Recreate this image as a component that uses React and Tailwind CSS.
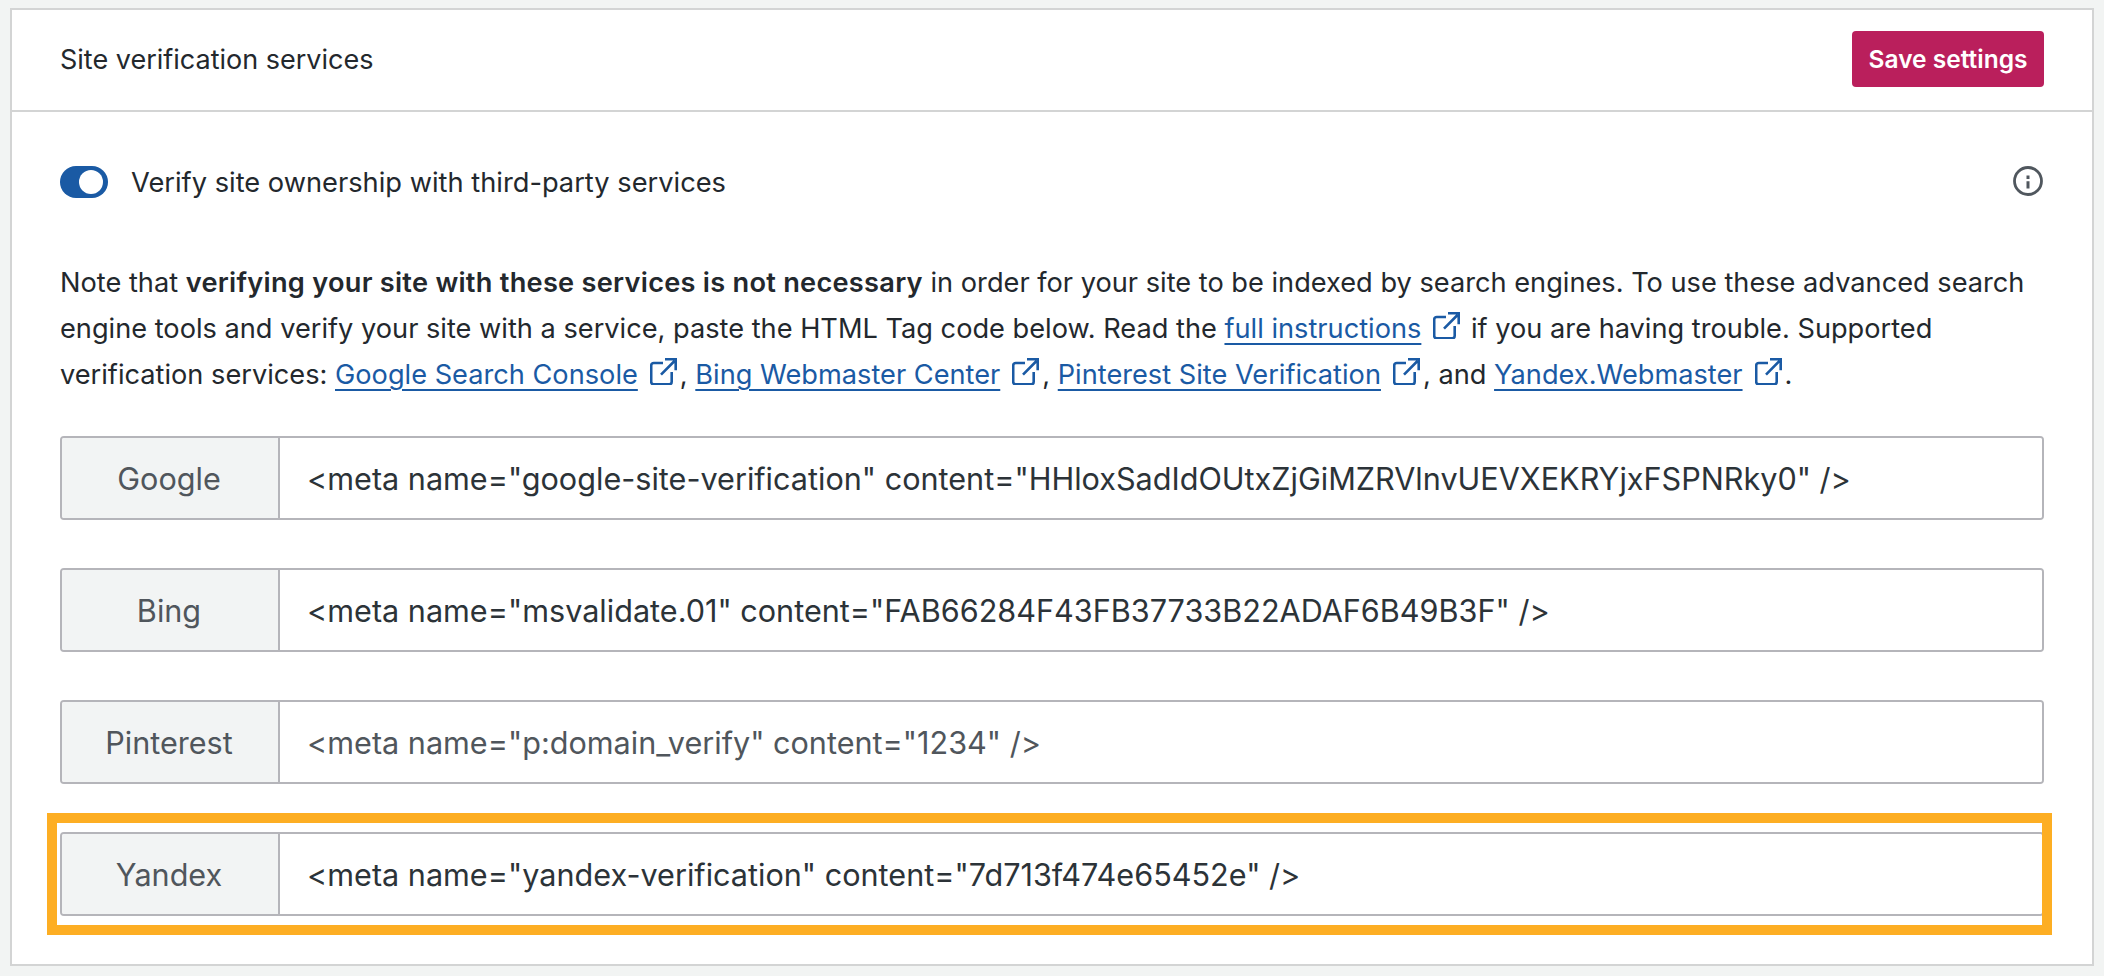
const services = [
  { name: "Google", value: '<meta name="google-site-verification" content="HHloxSadIdOUtxZjGiMZRVlnvUEVXEKRYjxFSPNRky0" />' },
  { name: "Bing", value: '<meta name="msvalidate.01" content="FAB66284F43FB37733B22ADAF6B49B3F" />' },
  { name: "Pinterest", value: '<meta name="p:domain_verify" content="1234" />', dim: true },
];

function ExternalIcon() {
  return (
    <svg className="ml-[12px] mr-[3px] inline-block h-[27px] w-[27px] align-[-1px]" viewBox="0 0 27 27" fill="none" stroke="#1a5aa4" strokeWidth="2.6">
      <path d="M13 5H3.8a2.6 2.6 0 0 0-2.6 2.6v16.1a2.6 2.6 0 0 0 2.6 2.6h15.3a2.6 2.6 0 0 0 2.6-2.6V14" />
      <path d="M11 16.7 24.5 3M15 1.3h10.7v11" />
    </svg>
  );
}

function DocLink({ children }) {
  return (
    <>
      <a href="#" className="text-[#1a5aa4] underline decoration-2 underline-offset-[5px]">{children}</a>
      <ExternalIcon />
    </>
  );
}

function ServiceRow({ name, value, dim }) {
  return (
    <div className="flex h-[84px] overflow-hidden rounded border-2 border-[#b5b5ba] text-[30.6px]">
      <div className="flex w-[218px] items-center justify-center border-r-2 border-[#b5b5ba] bg-[#f2f4f4] pr-[2px] pt-[2px] text-[#50565c]">
        {name}
      </div>
      <div className={"flex flex-1 items-center bg-white pl-[27px] pt-[2px] " + (dim ? "text-[#50565c]" : "text-[#2c3338]")}>
        {value}
      </div>
    </div>
  );
}

export default function App() {
  return (
    <div className="h-[976px] overflow-hidden bg-[#f2f4f3] px-[10px] pt-2 font-['Inter',sans-serif] text-[#23282d]">
      <div className="h-[958px] border-2 border-[#d3d4d4] bg-white">
        <header className="flex h-[102px] items-center justify-between border-b-2 border-[#d3d4d4] px-[48px] pb-[2px]">
          <h2 className="pt-[3px] text-[27px]">Site verification services</h2>
          <button className="h-[56px] w-[192px] rounded bg-[#ba1f5c] text-[24.5px] font-semibold text-white">Save settings</button>
        </header>

        <div className="px-[48px] pt-[54px]">
          <div className="flex h-[32px] items-center">
            <div className="flex h-[32px] w-[48px] items-center justify-end rounded-full bg-[#1a5aa4] pr-[5px]">
              <div className="h-[24px] w-[24px] rounded-full bg-white" />
            </div>
            <span className="ml-[23px] pt-[2px] text-[27.25px]">Verify site ownership with third-party services</span>
            <svg className="-mt-[3px] ml-auto mr-[1px] h-[30px] w-[30px]" viewBox="0 0 30 30" fill="none">
              <circle cx="15" cy="15" r="13.5" stroke="#50575e" strokeWidth="2.8" />
              <path d="M15 15.2v7.3M15 9.5v3.4" stroke="#50575e" strokeWidth="3" />
            </svg>
          </div>

          <p className="mt-[62px] text-[27.2px] leading-[46px]">
            Note that <strong className="font-semibold tracking-[0.0095em]">verifying your site with these services is not necessary</strong> in order for your site to be indexed by search engines. To use these advanced search engine tools and verify your site with a service, paste the HTML Tag code below. Read the{" "}
            <DocLink>full instructions</DocLink>{" "}
            if you are having trouble. Supported verification services:{" "}
            <DocLink>Google Search Console</DocLink>, <DocLink>Bing Webmaster Center</DocLink>, <DocLink>Pinterest Site Verification</DocLink>, and <DocLink>Yandex.Webmaster</DocLink>.
          </p>

          <div className="mt-[38px] flex flex-col gap-[48px]">
            {services.map((s) => (
              <ServiceRow key={s.name} {...s} />
            ))}
            <div className="relative">
              <ServiceRow name="Yandex" value={'<meta name="yandex-verification" content="7d713f474e65452e" />'} />
              <div className="absolute -bottom-[19px] -left-[13px] -right-[8px] -top-[19px] border-[10px] border-[#fdae23]" />
            </div>
          </div>
        </div>
      </div>
    </div>
  );
}
